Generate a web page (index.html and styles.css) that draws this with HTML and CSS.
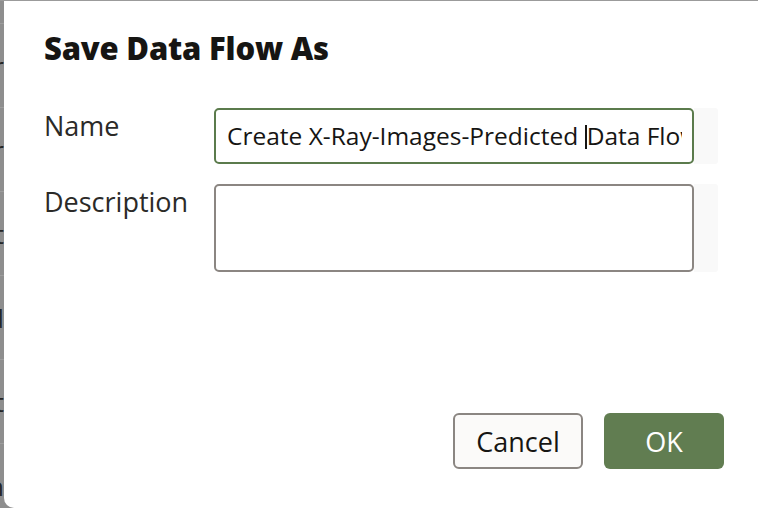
FILE: index.html
```html
<!DOCTYPE html>
<html lang="en">
<head>
<meta charset="utf-8">
<title>Save Data Flow As</title>
<link rel="stylesheet" href="styles.css">
</head>
<body>
<div class="screen">
  <div class="backdrop">
    <div class="bg-row bg-row-first"></div>
    <div class="bg-row"><span>Sour</span></div>
    <div class="bg-row"><span>Filter</span></div>
    <div class="bg-row"><span>Select</span></div>
    <div class="bg-row"><span>Add</span></div>
    <div class="bg-row"><span>Predict</span></div>
    <div class="bg-row"><span>Join</span></div>
  </div>
  <div class="dialog" role="dialog" aria-labelledby="dlg-title">
    <h1 class="dialog-title" id="dlg-title">Save Data Flow As</h1>
    <div class="form">
      <div class="form-row">
        <label class="form-label">Name</label>
        <div class="field field-focused">
          <div class="field-text">Create X-Ray-Images-Predicted <span class="caret"></span>Data Flow</div>
        </div>
        <div class="field-end"></div>
      </div>
      <div class="form-row">
        <label class="form-label">Description</label>
        <div class="field field-area"></div>
        <div class="field-end field-end-area"></div>
      </div>
    </div>
    <div class="dialog-footer">
      <button class="btn btn-secondary">Cancel</button>
      <button class="btn btn-primary">OK</button>
    </div>
  </div>
</div>
</body>
</html>
```

FILE: styles.css
```css
* { box-sizing: border-box; }

html, body {
  margin: 0;
  padding: 0;
  background: #8e8e8e;
}

body {
  font-family: "Open Sans", "Noto Sans", sans-serif;
  color: #161513;
}

.screen {
  display: flex;
  width: 758px;
  height: 508px;
  overflow: hidden;
  background: #8e8e8e;
  border-top: 1px solid #9b9b9b;
}

.backdrop {
  width: 4px;
  flex-shrink: 0;
  overflow: hidden;
  display: flex;
  flex-direction: column;
  margin-top: -1px;
}

.bg-row {
  flex-shrink: 0;
  height: 84px;
  border-bottom: 1px solid #9d9d9d;
  display: flex;
  justify-content: flex-end;
  align-items: center;
  white-space: nowrap;
  font-size: 26px;
  color: #262626;
}

.bg-row-first { height: 24px; }

.dialog {
  flex: 1;
  background: #ffffff;
  border-bottom-left-radius: 10px;
  display: flex;
  flex-direction: column;
  padding: 27px 34px 0 40px;
}

.dialog-title {
  margin: 0;
  font-size: 31px;
  line-height: 40px;
  font-weight: 800;
  color: #161513;
  letter-spacing: -0.2px;
}

.form {
  margin-top: 40px;
  display: flex;
  flex-direction: column;
  gap: 20px;
}

.form-row {
  display: flex;
  align-items: flex-start;
}

.form-label {
  width: 170px;
  flex-shrink: 0;
  font-size: 27px;
  line-height: 36px;
  color: #2b2a28;
}

.field {
  width: 480px;
  height: 56px;
  border: 2px solid #8b8682;
  border-radius: 5px;
  background: #fff;
  padding: 0 10px 0 11px;
}

.field-focused {
  border-color: #5b7b4c;
}

.field-area {
  height: 88px;
}

.field-text {
  height: 52px;
  line-height: 52px;
  font-size: 24.5px;
  white-space: nowrap;
  overflow: hidden;
  color: #161513;
}

.caret {
  display: inline-block;
  width: 2px;
  height: 24px;
  background: #161513;
  vertical-align: -4px;
}

.field-end {
  width: 24px;
  height: 56px;
  background: #f9f9f9;
  border-radius: 0 3px 3px 0;
}

.field-end-area { height: 88px; }

.dialog-footer {
  margin-top: auto;
  margin-bottom: 39px;
  display: flex;
  justify-content: flex-end;
  gap: 21px;
}

.btn {
  font-family: "Open Sans", "Noto Sans", sans-serif;
  font-size: 27px;
  height: 56px;
  border-radius: 6px;
  padding: 0;
  line-height: 1;
  cursor: pointer;
}

.btn-secondary {
  width: 130px;
  background: #fbfaf9;
  border: 2px solid #8b8682;
  color: #161513;
}

.btn-primary {
  width: 120px;
  background: #617d51;
  border: none;
  color: #ffffff;
}
```
